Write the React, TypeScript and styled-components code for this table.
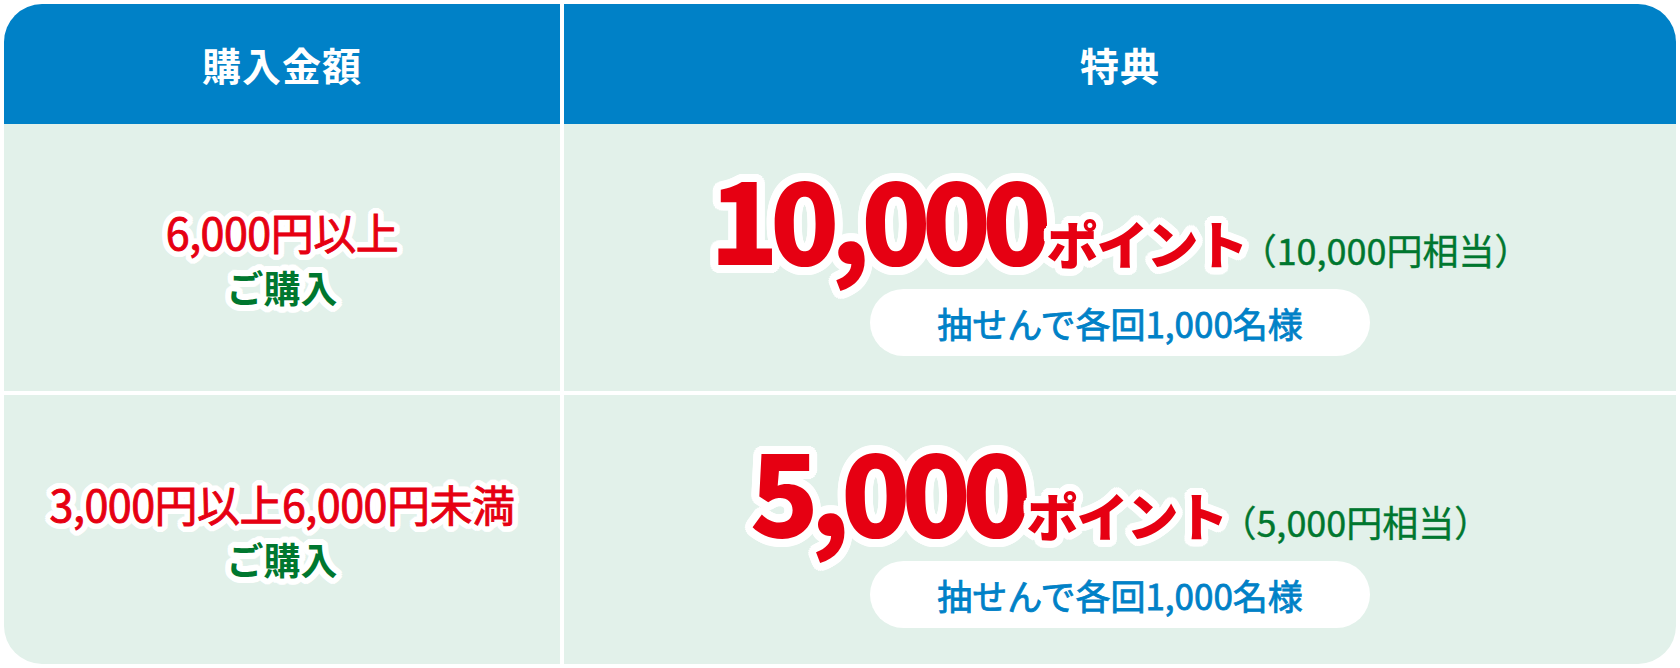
import React from 'react';
import styled, { createGlobalStyle } from 'styled-components';

const outline = (r: number, color: string) => {
    const parts: string[] = [];
    for (const rad of [r, r * 0.6]) {
        for (let a = 0; a < 360; a += 15) {
            const x = (Math.cos((a * Math.PI) / 180) * rad).toFixed(2);
            const y = (Math.sin((a * Math.PI) / 180) * rad).toFixed(2);
            parts.push(`${x}px ${y}px 0 ${color}`);
        }
    }
    return parts.join(', ');
};

const GlobalStyle = createGlobalStyle`
    html, body {
        margin: 0;
        padding: 0;
        background: #ffffff;
    }
    body {
        font-family: "Noto Sans CJK JP", "Noto Sans", sans-serif;
    }
`;

const Page = styled.div`
    width: 1680px;
    height: 668px;
    box-sizing: border-box;
    padding: 4px;
`;

const Table = styled.div`
    display: grid;
    grid-template-columns: 556px 1fr;
    grid-template-rows: 120px 267px 273px;
    column-gap: 4px;
    height: 660px;
    border-radius: 38px;
    overflow: hidden;
    background: #ffffff;
`;

const HeadCell = styled.div`
    background: #0081c7;
    color: #ffffff;
    display: flex;
    align-items: center;
    justify-content: center;
    font-size: 39px;
    font-weight: 700;
    letter-spacing: 1px;
`;

const BodyCell = styled.div<{ $divider?: boolean }>`
    background: #e2f1ea;
    border-top: ${props => props.$divider ? '4px solid #ffffff' : 'none'};
    display: flex;
    flex-direction: column;
    align-items: center;
    justify-content: center;
`;

const Amount = styled.div`
    color: #e60012;
    font-size: 43px;
    font-weight: 400;
    line-height: 1.2;
    letter-spacing: -0.5px;
    -webkit-text-stroke: 0.9px #e60012;
    text-shadow: ${outline(6, '#ffffff')};
`;

const Purchase = styled.div`
    color: #00772f;
    font-size: 37px;
    font-weight: 700;
    line-height: 1.2;
    margin-top: 8px;
    text-shadow: ${outline(6, '#ffffff')};
`;

const PrizeLine = styled.div`
    display: flex;
    align-items: baseline;
    justify-content: center;
    line-height: 1;
`;

const Points = styled.span`
    color: #e60012;
    font-size: 114px;
    font-weight: 900;
    letter-spacing: -9px;
    text-shadow: ${outline(8, '#ffffff')};
`;

const PointsUnit = styled.span`
    color: #e60012;
    font-size: 52px;
    font-weight: 900;
    margin-left: 4px;
    letter-spacing: -2px;
    text-shadow: ${outline(7, '#ffffff')};
`;

const Equivalent = styled.span`
    color: #00772f;
    font-size: 36px;
    font-weight: 400;
    margin-left: -6px;
    -webkit-text-stroke: 0.4px #00772f;
`;

const Lottery = styled.div`
    margin-top: 16px;
    width: 500px;
    height: 67px;
    border-radius: 34px;
    background: #ffffff;
    color: #0081c7;
    font-size: 35px;
    font-weight: 400;
    -webkit-text-stroke: 0.8px #0081c7;
    display: flex;
    align-items: center;
    justify-content: center;
`;

const rows = [
    { amount: '6,000円以上', points: '10,000', yen: '（10,000円相当）' },
    { amount: '3,000円以上6,000円未満', points: '5,000', yen: '（5,000円相当）' },
];

const App = () => {
    return (
        <Page>
            <GlobalStyle />
            <Table>
                <HeadCell>購入金額</HeadCell>
                <HeadCell>特典</HeadCell>
                {rows.map((row, i) =>
                    <React.Fragment key={`row${i}`}>
                        <BodyCell $divider={i > 0}>
                            <Amount>{row.amount}</Amount>
                            <Purchase>ご購入</Purchase>
                        </BodyCell>
                        <BodyCell $divider={i > 0}>
                            <PrizeLine>
                                <Points>{row.points}</Points>
                                <PointsUnit>ポイント</PointsUnit>
                                <Equivalent>{row.yen}</Equivalent>
                            </PrizeLine>
                            <Lottery>抽せんで各回1,000名様</Lottery>
                        </BodyCell>
                    </React.Fragment>
                )}
            </Table>
        </Page>
    );
};

export default App;
